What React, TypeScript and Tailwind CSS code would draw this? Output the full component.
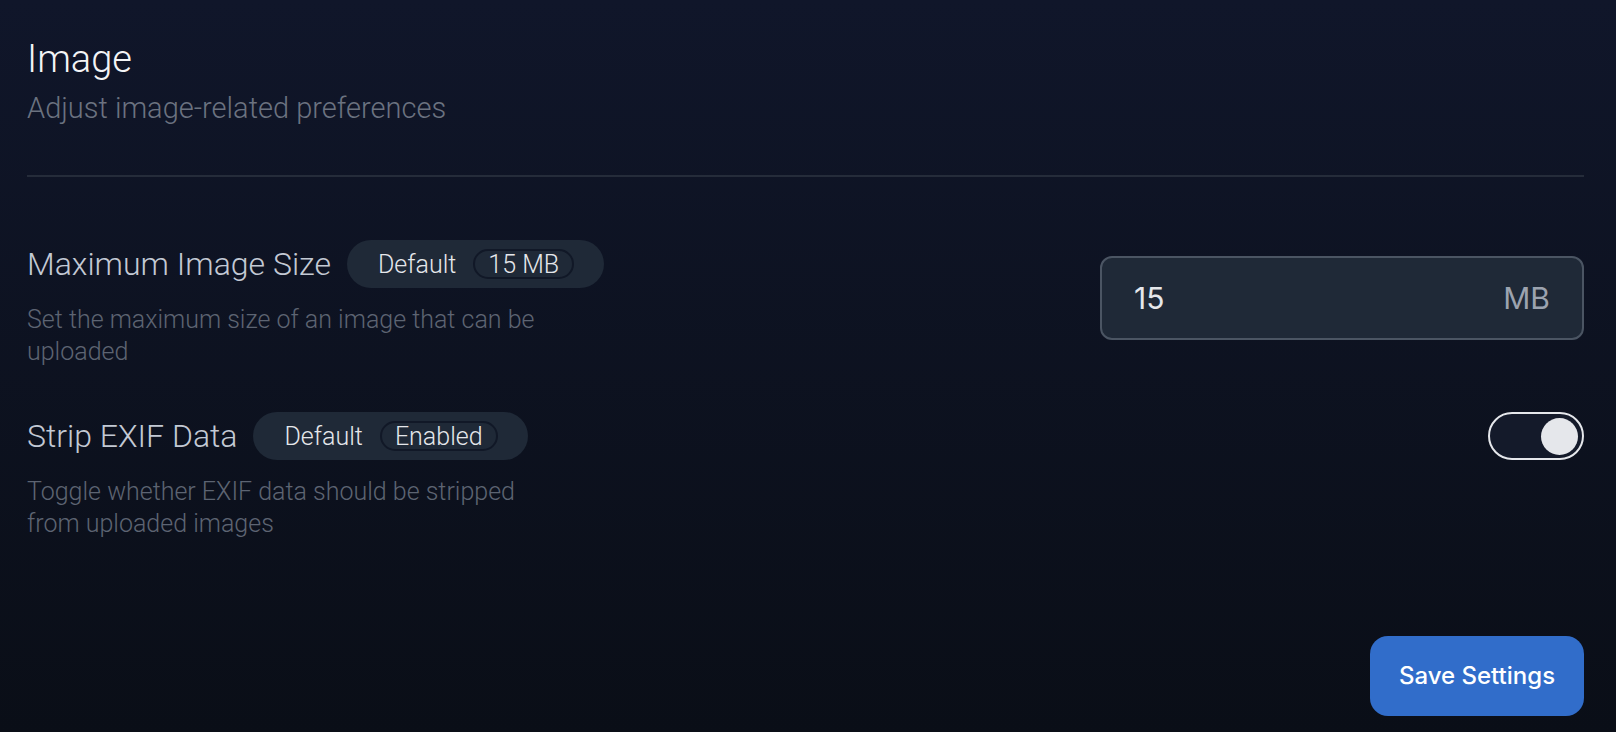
import React from "react";

function Pill({ value }: { value: string }) {
  return (
    <div className="flex h-[48px] items-center gap-[17px] rounded-full bg-[#1f2937] pl-[31px] pr-[30px] text-[25px] font-light leading-none text-[#e5e7eb]">
      <span>Default</span>
      <span className="flex h-[30px] items-center rounded-full border-2 border-[#111827] px-[13px]">{value}</span>
    </div>
  );
}

export default function App() {
  return (
    <div
      className="flex min-h-screen w-full flex-col bg-gradient-to-b from-[#10162a] to-[#0a0e17] pb-[16px] pl-[27px] pr-[32px] pt-[37px]"
      style={{ fontFamily: "Roboto, 'Noto Sans', sans-serif" }}
    >
      <h1 className="text-[38px] font-light leading-[44px] text-[#f3f4f6]">Image</h1>
      <p className="mt-[11px] text-[29px] font-light leading-[32px] text-[#6b7280]">Adjust image-related preferences</p>
      <div className="mt-[51px] h-[2px] w-full bg-[#252c3a]" />

      <div className="mt-[63px] flex flex-col gap-[44px]">
        <div className="flex items-start justify-between">
          <div className="flex flex-col">
            <div className="flex items-center gap-[16px]">
              <span className="text-[32px] font-light text-[#c3c9d4]">Maximum Image Size</span>
              <Pill value="15 MB" />
            </div>
            <p className="mt-[16px] max-w-[540px] text-[25px] font-light leading-[32px] text-[#5d6472]">
              Set the maximum size of an image that can be uploaded
            </p>
          </div>
          <div
            className="mt-[16px] flex h-[84px] w-[484px] items-center justify-between rounded-[12px] border-2 border-[#4b5563] bg-[#1f2937] px-[32px] text-[30px]"
            style={{ fontFamily: "Inter, 'Noto Sans', sans-serif" }}
          >
            <span className="text-[#e5e7eb]">15</span>
            <span className="text-[#9ca3af]">MB</span>
          </div>
        </div>

        <div className="flex items-start justify-between">
          <div className="flex flex-col">
            <div className="flex items-center gap-[16px]">
              <span className="text-[32px] font-light text-[#c3c9d4]">Strip EXIF Data</span>
              <Pill value="Enabled" />
            </div>
            <p className="mt-[16px] max-w-[540px] text-[25px] font-light leading-[32px] text-[#5d6472]">
              Toggle whether EXIF data should be stripped from uploaded images
            </p>
          </div>
          <div className="flex h-[48px] w-[96px] items-center justify-end rounded-full border-2 border-[#e5e7eb] bg-[#141a2a] pr-[4px]">
            <div className="h-[37px] w-[37px] rounded-full bg-[#e5e7eb]" />
          </div>
        </div>
      </div>

      <div className="mt-auto flex justify-end">
        <button
          className="h-[80px] w-[214px] rounded-[18px] bg-[#316dca] text-[24px] font-medium text-white"
          style={{ fontFamily: "Inter, 'Noto Sans', sans-serif" }}
        >
          Save Settings
        </button>
      </div>
    </div>
  );
}
